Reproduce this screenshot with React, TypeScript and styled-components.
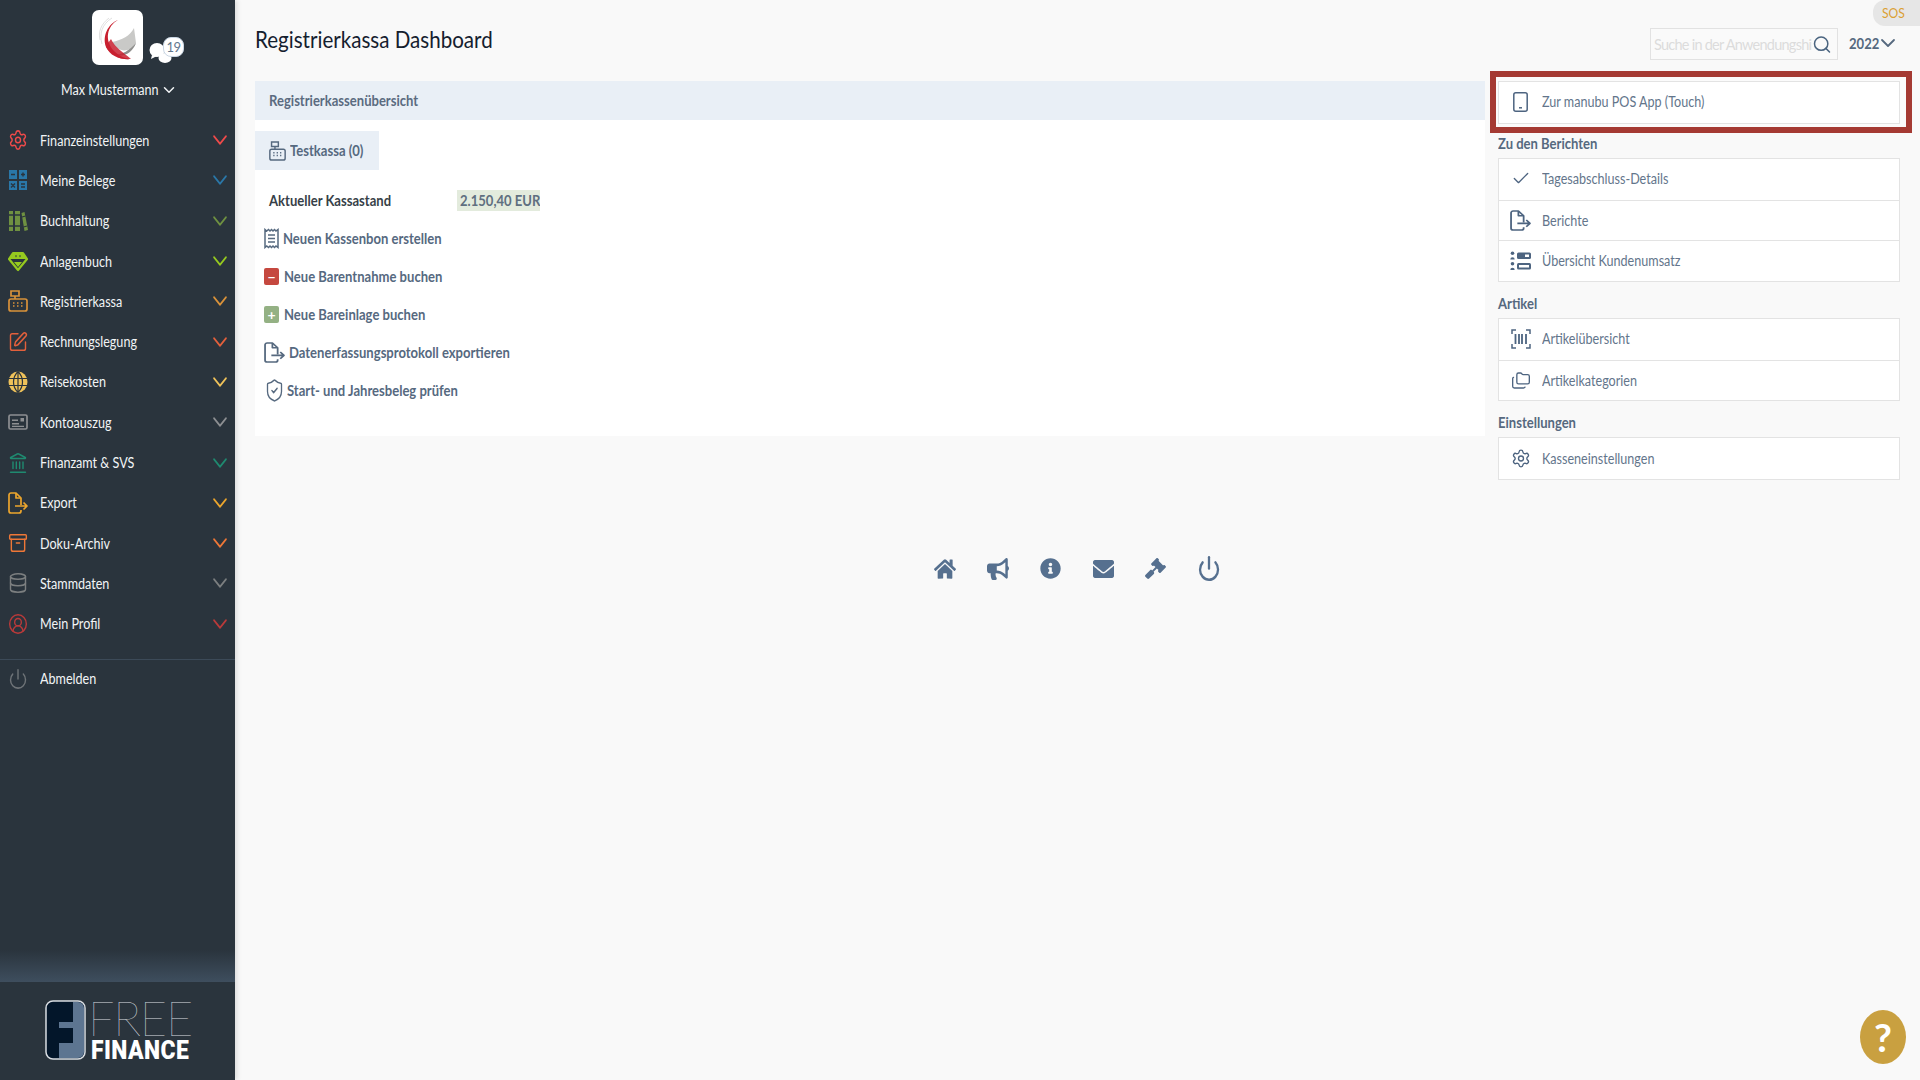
import React from "react";
import styled, { createGlobalStyle } from "styled-components";
import {
  Archive, Check, ChevronDown, CircleUserRound, Database, Folders, Landmark, Power, Search, Settings,
  ShieldCheck, SquarePen,
} from "lucide-react";
import { FaBullhorn, FaEnvelope, FaGavel, FaHome, FaInfoCircle } from "react-icons/fa";

const Global = createGlobalStyle`
  html, body { margin: 0; padding: 0; background: #f9f9f9; }
  body { font-family: "Lato", "Liberation Sans", sans-serif; font-size: 14.5px; overflow: hidden; }
  * { box-sizing: border-box; }
`;

/* The reference is a horizontally squeezed capture, so text is narrowed the same way. */
const T = styled.span`
  display: inline-block; white-space: nowrap; transform: scaleX(.868); transform-origin: left center;
`;
const B = styled(T)`font-weight: 700; transform: scaleX(.9);`;

const Page = styled.div`display: flex; width: 1920px; height: 1080px; position: relative; overflow: hidden;`;

const Sidebar = styled.aside`
  width: 235px; height: 1080px; flex: none; background: #2a343d; color: #f2f4f6;
  display: flex; flex-direction: column; box-shadow: 2px 0 5px rgba(0,0,0,.12); position: relative;
`;
const Profile = styled.div`display: flex; flex-direction: column; align-items: center; padding-top: 10px; height: 120px; position: relative;`;
const Avatar = styled.div`width: 51px; height: 55px; background: #fff; border-radius: 7px; overflow: hidden; display: flex;`;
const Bubbles = styled.div`position: absolute; left: 148px; top: 36px; width: 36px; height: 28px;`;
const Badge = styled.span`
  position: absolute; left: 15px; top: 1px; width: 21px; height: 20px; border-radius: 8px; background: #fff; border: 1px solid #c9d6e4;
  color: #62788f; font-size: 13px; line-height: 18px; text-align: center; letter-spacing: -.6px;
`;
const UserName = styled.div`display: flex; align-items: center; align-self: flex-start; margin: 15px 0 0 61px; line-height: 20px;`;
const UserChevron = styled(ChevronDown)`margin-left: -14px; width: 18px; height: 18px; flex: none;`;
const Menu = styled.nav`display: flex; flex-direction: column;`;
const MenuRow = styled.div`
  height: 40.3px; display: flex; align-items: center; padding: 0 5px 0 8px;
`;
const MenuLabel = styled(T)`margin-left: 12px; flex: 1;`;
const IconBox = styled.div<{ $color: string }>`width: 20px; height: 22px; flex: none; color: ${(p) => p.$color}; display: flex; align-items: center; justify-content: center;`;
const MenuChevron = styled(ChevronDown)`width: 24px; height: 30px; flex: none;`;
const Divider = styled.div`height: 1px; background: #3c4a58; margin-top: 15px;`;
const Logout = styled(MenuRow)`height: 38px;`;
const Band = styled.div`margin-top: auto; height: 32px; background: linear-gradient(#2a343d, #3e4e5e);`;
const LogoWrap = styled.div`height: 98px; display: flex; padding: 18px 0 0 45px; gap: 5px;`;
const LogoText = styled.div`display: flex; flex-direction: column; width: 100px;`;
const LogoFree = styled.span`
  font-weight: 100; font-size: 47px; line-height: 36px; height: 40px; letter-spacing: -1.2px; color: #d6dadf; white-space: nowrap; margin-left: -3px;
`;
const LogoFinance = styled.span`
  font-family: "Roboto", sans-serif; font-weight: 900; font-size: 26px; line-height: 21px; color: #fff; letter-spacing: .5px; white-space: nowrap;
  transform: scaleX(.88); transform-origin: left center;
`;

const Main = styled.main`flex: 1; display: flex; flex-direction: column; min-width: 0;`;
const Content = styled.div`display: flex; height: 436px; padding-left: 20px;`;
const LeftCol = styled.div`width: 1230px; flex: none;`;
const Title = styled.h1`margin: 0; height: 81px; font-size: 23.5px; font-weight: 400; line-height: 78px; color: #14202e;`;
const TitleText = styled(T)`transform: scaleX(.875);`;
const Panel = styled.section`background: #fff; height: 355px;`;
const PanelHead = styled.div`height: 39px; background: #e9eff6; padding-left: 14px; line-height: 39px; color: #5b6b80;`;
const Tab = styled.div`
  margin-top: 11px; width: 124px; height: 39px; background: #e9eff6; display: flex; align-items: center; gap: 4px; padding-left: 14px;
  color: #56697f; overflow: hidden;
`;
const BalanceRow = styled.div`display: flex; align-items: center; height: 22px; margin-top: 19px; padding-left: 14px; color: #373f48;`;
const BalanceLabel = styled.span`width: 188px;`;
const BalanceValue = styled.span`height: 21px; width: 83px; background: #e3ebdd; color: #5f6f80; line-height: 21px; padding-left: 3px; overflow: hidden;`;
const Links = styled.div`display: flex; flex-direction: column; margin-top: 8px; padding-left: 9px;`;
const LinkRow = styled.a<{ $gap: number }>`
  height: 38px; display: flex; align-items: center; gap: ${(p) => p.$gap}px; color: #56697f;
`;
const Square = styled.span<{ $bg: string }>`
  width: 15px; height: 17px; border-radius: 2px; background: ${(p) => p.$bg}; color: #fff; font-size: 14px; font-weight: 700; display: flex; align-items: center; justify-content: center; flex: none;
`;

const RightCol = styled.div`width: 422px; margin-left: 5px; flex: none; display: flex; flex-direction: column; & > * { flex: none; }`;
const TopBar = styled.div`height: 71px; display: flex; align-items: flex-start; padding: 28px 0 0 160px; gap: 11px;`;
const SearchBox = styled.div`width: 188px; height: 32px; border: 1px solid #e2e2e2; display: flex; align-items: center; padding: 0 5px 0 3px; background: #fafafa; color: #4b6580;`;
const SearchInput = styled.input`
  flex: 1; min-width: 0; border: 0; outline: 0; background: transparent; padding: 0; font: 400 14.5px "Lato", sans-serif; letter-spacing: -.75px;
  &::placeholder { color: #dcdcdc; opacity: 1; }
`;
const Year = styled.div`display: flex; align-items: center; height: 30px; color: #56697f;`;
const YearChevron = styled(ChevronDown)`margin-left: -7px; width: 24px; height: 24px; flex: none;`;
const Highlight = styled.div`border: 6px solid #a53a33; padding: 4px 6px 4px 2px; height: 62px; background: #fbfbfb;`;
const Group = styled.div`margin-left: 8px; width: 402px;`;
const GroupLabel = styled.div<{ $h: number }>`height: ${(p) => p.$h}px; display: flex; align-items: flex-end; padding-bottom: 6.5px; color: #56697f;`;
const List = styled.div`border: 1px solid #e3e3e3; background: #fff; & > div + div { border-top: 1px solid #e3e3e3; }`;
const ListRow = styled.div`height: 40.7px; display: flex; align-items: center; padding: 0 0 1px 11px; gap: 11px; color: #63758b;`;
const ListIcon = styled.div`width: 21px; height: 22px; color: #4d6480; display: flex; align-items: center; justify-content: center; flex: none;`;

const BottomIcons = styled.div`display: flex; justify-content: center; align-items: center; margin-top: 119px; gap: 31.4px; color: #56708f;`;
const MailIcon = styled(FaEnvelope)`width: 21px; height: 24px;`;
const Sos = styled.div`position: absolute; top: 0; right: 0; width: 47px; height: 26px; border-radius: 12px 0 0 12px; background: #e6e6e6; color: #dba033; font-size: 14px; line-height: 26px; padding-left: 9px;`;
const Help = styled.div`position: absolute; left: 1860px; top: 1010px; width: 46px; height: 54px; border-radius: 50%; background: #c9a040; color: #fff; font-size: 39px; font-weight: 700; line-height: 54px; text-align: center;`;

const size = { width: 20, height: 22, preserveAspectRatio: "none" } as const;

const Calc = () => (
  <svg {...size} viewBox="0 0 20 22">
    <path fill="currentColor" d="M1 1h8v9H1zM11 1h8v9h-8zM1 12h8v9H1zM11 12h8v9h-8z" />
    <path stroke="#2a343d" strokeWidth="1.4" d="M3 5.5h4M13 5.5h4M15 3.5v4M3 14.5l4 4M7 14.5l-4 4M13 15h4M13 18h4" />
  </svg>
);
const Books = () => (
  <svg {...size} viewBox="0 0 20 22">
    <path fill="currentColor" d="M1 1h4v20H1zM7 1h5v20H7zM13.5 3l3-1 3.5 18-3.500 1z" />
    <path stroke="#2a343d" strokeWidth="1.3" d="M1 5h11M1 16h11M14 7l3.500-1M15.500 17l3.500-1" />
  </svg>
);
const GemIcon = () => (
  <svg {...size} viewBox="0 0 20 22">
    <path fill="none" stroke="currentColor" strokeWidth="2.2" strokeLinejoin="round" d="M5 3h10l4 6-9 11L1 9z" />
    <path fill="currentColor" d="M5 3h10l4 6H1zM6 12h8l-4 5z" />
    <path fill="#2a343d" d="M7 5.500h2l-1 2zM11 5.500h2l-1 2z" />
  </svg>
);
const Register = ({ w = 20, h = 22 }: { w?: number; h?: number }) => (
  <svg width={w} height={h} viewBox="0 0 20 22" preserveAspectRatio="none" fill="none" stroke="currentColor" strokeWidth="1.7" style={{ flex: "none" }}>
    <path d="M3 1h8v5H3zM7 6v3" />
    <rect x="1" y="9" width="18" height="12" rx="2" />
    <path d="M5 13h1.500M9 13h1.500M13 13h1.500M5 16h1.500M9 16h1.500M13 16h1.500" />
  </svg>
);
const GlobeIcon = () => (
  <svg {...size} viewBox="0 0 20 22">
    <ellipse cx="10" cy="11" rx="9.500" ry="10.500" fill="currentColor" />
    <path fill="none" stroke="#2a343d" strokeWidth="1.200" d="M1 7.500h18M1 14.500h18M10 .5v21M10 .5c-6 6-6 15 0 21M10 .5c6 6 6 15 0 21" />
  </svg>
);
const CardIcon = () => (
  <svg {...size} viewBox="0 0 20 22" fill="none">
    <rect x="1" y="4" width="18" height="14" rx="1.500" stroke="currentColor" strokeWidth="1.700" />
    <path fill="currentColor" d="M4 12h7v1.500H4zM4 14.800h12v1.200H4zM12.500 7H16v3.500h-3.500zM4 8.500h6V10H4z" />
  </svg>
);
const ExportIcon = ({ w = 20, h = 22 }: { w?: number; h?: number }) => (
  <svg width={w} height={h} viewBox="0 0 20 22" preserveAspectRatio="none" fill="none" stroke="currentColor" strokeWidth="1.700" strokeLinejoin="round" style={{ flex: "none" }}>
    <path d="M13 13V6l-5-5H3a2 2 0 0 0-2 2v16a2 2 0 0 0 2 2h8a2 2 0 0 0 2-2v-1" />
    <path d="M8 1v5h5M7 14h12M15.500 10.500 19 14l-3.500 3.500" />
  </svg>
);
const Receipt = () => (
  <svg width="15" height="21" viewBox="0 0 15 21" fill="none" stroke="currentColor" strokeWidth="1.500" style={{ flex: "none" }}>
    <path d="M1 1.500 2.750 3 4.500 1.500 6 3l1.500-1.500L9 3l1.500-1.500L12 3l2-1.500v18L12 18l-1.500 1.500L9 18l-1.500 1.500L6 18l-1.500 1.500L2.750 18 1 19.500z" />
    <path d="M4 7h7M4 10.500h7M4 14h7" />
  </svg>
);
const TabletIcon = () => (
  <svg width="15" height="20" viewBox="0 0 15 20" fill="none" stroke="currentColor" strokeWidth="1.500">
    <rect x=".8" y=".8" width="13.400" height="18.400" rx="2" />
    <path d="M6 15.800h3" />
  </svg>
);
const Customers = () => (
  <svg width="21" height="20" viewBox="0 0 21 20">
    <circle cx="2.500" cy="2.200" r="1.800" fill="currentColor" />
    <path fill="currentColor" d="M.3 8.500a2.200 2.200 0 0 1 4.400 0zM.3 19a2.200 2.200 0 0 1 4.400 0z" />
    <circle cx="2.500" cy="12.700" r="1.800" fill="currentColor" />
    <rect x="7" y="1.500" width="14" height="6.500" rx="1.500" fill="currentColor" />
    <rect x="7" y="12" width="14" height="6.500" rx="1.500" fill="currentColor" />
    <path fill="#fff" d="M15 3.500h4v2.500h-4zM9 14h10v2.500H9z" />
  </svg>
);
const Barcode = () => (
  <svg width="20" height="20" viewBox="0 0 20 20" fill="none" stroke="currentColor" strokeWidth="1.500">
    <path d="M1 5V1h4M15 1h4v4M1 15v4h4M15 19h4v-4" />
    <path strokeWidth="1.800" d="M4.500 5v10M8 5v10M11 5v10M15 5v10" />
  </svg>
);
const Swoosh = () => (
  <svg width="51" height="55" viewBox="0 0 51 55">
    <path fill="#c9c9c7" d="M42 18 L44 33 C38 43 26 43 20 32 C30 30 38 26 42 18z" />
    <path fill="#8f8f8d" d="M44 33c-3 9-12 15-22 12 8 0 16-5 22-12z" />
    <path fill="#c8202f" d="M26 10C15 16 12 30 22 41c6 6 13 8 17 8-10 1-20-3-25-12C10 26 16 14 26 10z" />
    <path fill="#c8202f" d="M14 37c4 9 14 13 25 12-9-8-15-10-20-20-2 3-4 5-5 8z" opacity=".85" />
    <path fill="none" stroke="#d8d8d8" strokeWidth=".8" d="M20 8C10 14 7 24 10 34M17 8C9 14 6 22 8 30" />
  </svg>
);
const BubblesIcon = () => (
  <svg width="36" height="28" viewBox="0 0 36 28" fill="#fff">
    <ellipse cx="9" cy="14" rx="7.500" ry="7" />
    <path d="M4 19l-1 4 6-3z" />
    <ellipse cx="17" cy="22" rx="6.500" ry="5" />
  </svg>
);
const LogoMark = () => (
  <svg width="41" height="60" viewBox="0 0 41 60">
    <rect x="1" y="1" width="39" height="58" rx="7" fill="#03162a" stroke="#d9dde2" strokeWidth="1.500" />
    <path fill="#5d7591" d="M28 2h5a6 6 0 0 1 6 6v44a6 6 0 0 1-6 6H14V43h14V28H14v-6h14z" />
  </svg>
);

const li = { strokeWidth: 1.700, width: 20, height: 22, preserveAspectRatio: "none" } as const;

const items: { label: string; color: string; icon: React.ReactNode }[] = [
  { label: "Finanzeinstellungen", color: "#ee4a4a", icon: <Settings {...li} /> },
  { label: "Meine Belege", color: "#2a77a8", icon: <Calc /> },
  { label: "Buchhaltung", color: "#6f9141", icon: <Books /> },
  { label: "Anlagenbuch", color: "#96c91f", icon: <GemIcon /> },
  { label: "Registrierkassa", color: "#d9923a", icon: <Register /> },
  { label: "Rechnungslegung", color: "#e2603c", icon: <SquarePen {...li} /> },
  { label: "Reisekosten", color: "#efc25a", icon: <GlobeIcon /> },
  { label: "Kontoauszug", color: "#8d8f92", icon: <CardIcon /> },
  { label: "Finanzamt & SVS", color: "#1f8a70", icon: <Landmark {...li} /> },
  { label: "Export", color: "#eca52d", icon: <ExportIcon /> },
  { label: "Doku-Archiv", color: "#ee7737", icon: <Archive {...li} /> },
  { label: "Stammdaten", color: "#7c7f80", icon: <Database {...li} /> },
  { label: "Mein Profil", color: "#b93a3a", icon: <CircleUserRound {...li} /> },
];

const listIcon = { width: 20, height: 21, strokeWidth: 1.600 };
const fa = { preserveAspectRatio: "none" } as const;

const App = () => (
  <>
    <Global />
    <Page>
      <Sidebar>
        <Profile>
          <Avatar><Swoosh /></Avatar>
          <Bubbles>
            <BubblesIcon />
            <Badge>19</Badge>
          </Bubbles>
          <UserName><T>Max Mustermann</T><UserChevron strokeWidth={2} /></UserName>
        </Profile>
        <Menu>
          {items.map((m) => (
            <MenuRow key={m.label}>
              <IconBox $color={m.color}>{m.icon}</IconBox>
              <MenuLabel>{m.label}</MenuLabel>
              <IconBox $color={m.color}><MenuChevron strokeWidth={1.600} preserveAspectRatio="none" /></IconBox>
            </MenuRow>
          ))}
        </Menu>
        <Divider />
        <Logout>
          <IconBox $color="#6f7478"><Power {...li} /></IconBox>
          <MenuLabel>Abmelden</MenuLabel>
        </Logout>
        <Band />
        <LogoWrap>
          <LogoMark />
          <LogoText>
            <LogoFree>FREE</LogoFree>
            <LogoFinance>FINANCE</LogoFinance>
          </LogoText>
        </LogoWrap>
      </Sidebar>
      <Main>
        <Content>
          <LeftCol>
            <Title><TitleText>Registrierkassa Dashboard</TitleText></Title>
            <Panel>
              <PanelHead><B>Registrierkassenübersicht</B></PanelHead>
              <Tab><Register w={17} h={20} /><B>Testkassa (0)</B></Tab>
              <BalanceRow>
                <BalanceLabel><B>Aktueller Kassastand</B></BalanceLabel>
                <BalanceValue><B>2.150,40 EUR</B></BalanceValue>
              </BalanceRow>
              <Links>
                <LinkRow $gap={4}><Receipt /><B>Neuen Kassenbon erstellen</B></LinkRow>
                <LinkRow $gap={5}><Square $bg="#c5483f">−</Square><B>Neue Barentnahme buchen</B></LinkRow>
                <LinkRow $gap={5}><Square $bg="#94b184">+</Square><B>Neue Bareinlage buchen</B></LinkRow>
                <LinkRow $gap={4}><ExportIcon w={21} h={21} /><B>Datenerfassungsprotokoll exportieren</B></LinkRow>
                <LinkRow $gap={2}><ShieldCheck width={21} height={25} strokeWidth={1.500} preserveAspectRatio="none" /><B>Start- und Jahresbeleg prüfen</B></LinkRow>
              </Links>
            </Panel>
          </LeftCol>
          <RightCol>
            <TopBar>
              <SearchBox>
                <SearchInput placeholder="Suche in der Anwendungshilfe" />
                <Search width={20} height={21} strokeWidth={1.800} />
              </SearchBox>
              <Year><B>2022</B><YearChevron strokeWidth={1.800} /></Year>
            </TopBar>
            <Highlight>
              <List>
                <ListRow>
                  <ListIcon><TabletIcon /></ListIcon><T>Zur manubu POS App (Touch)</T>
                </ListRow>
              </List>
            </Highlight>
            <Group>
              <GroupLabel $h={25}><B>Zu den Berichten</B></GroupLabel>
              <List>
                <ListRow><ListIcon><Check {...listIcon} /></ListIcon><T>Tagesabschluss-Details</T></ListRow>
                <ListRow><ListIcon><ExportIcon w={21} h={21} /></ListIcon><T>Berichte</T></ListRow>
                <ListRow><ListIcon><Customers /></ListIcon><T>Übersicht Kundenumsatz</T></ListRow>
              </List>
              <GroupLabel $h={36}><B>Artikel</B></GroupLabel>
              <List>
                <ListRow><ListIcon><Barcode /></ListIcon><T>Artikelübersicht</T></ListRow>
                <ListRow><ListIcon><Folders {...listIcon} /></ListIcon><T>Artikelkategorien</T></ListRow>
              </List>
              <GroupLabel $h={36}><B>Einstellungen</B></GroupLabel>
              <List>
                <ListRow><ListIcon><Settings {...listIcon} /></ListIcon><T>Kasseneinstellungen</T></ListRow>
              </List>
            </Group>
          </RightCol>
        </Content>
        <BottomIcons>
          <FaHome {...fa} size={22} />
          <FaBullhorn {...fa} size={22} />
          <FaInfoCircle {...fa} size={21} />
          <MailIcon {...fa} />
          <FaGavel {...fa} size={21} />
          <Power width={24} height={27} strokeWidth={2.300} preserveAspectRatio="none" />
        </BottomIcons>
      </Main>
      <Sos><T>SOS</T></Sos>
      <Help>?</Help>
    </Page>
  </>
);

export default App;
